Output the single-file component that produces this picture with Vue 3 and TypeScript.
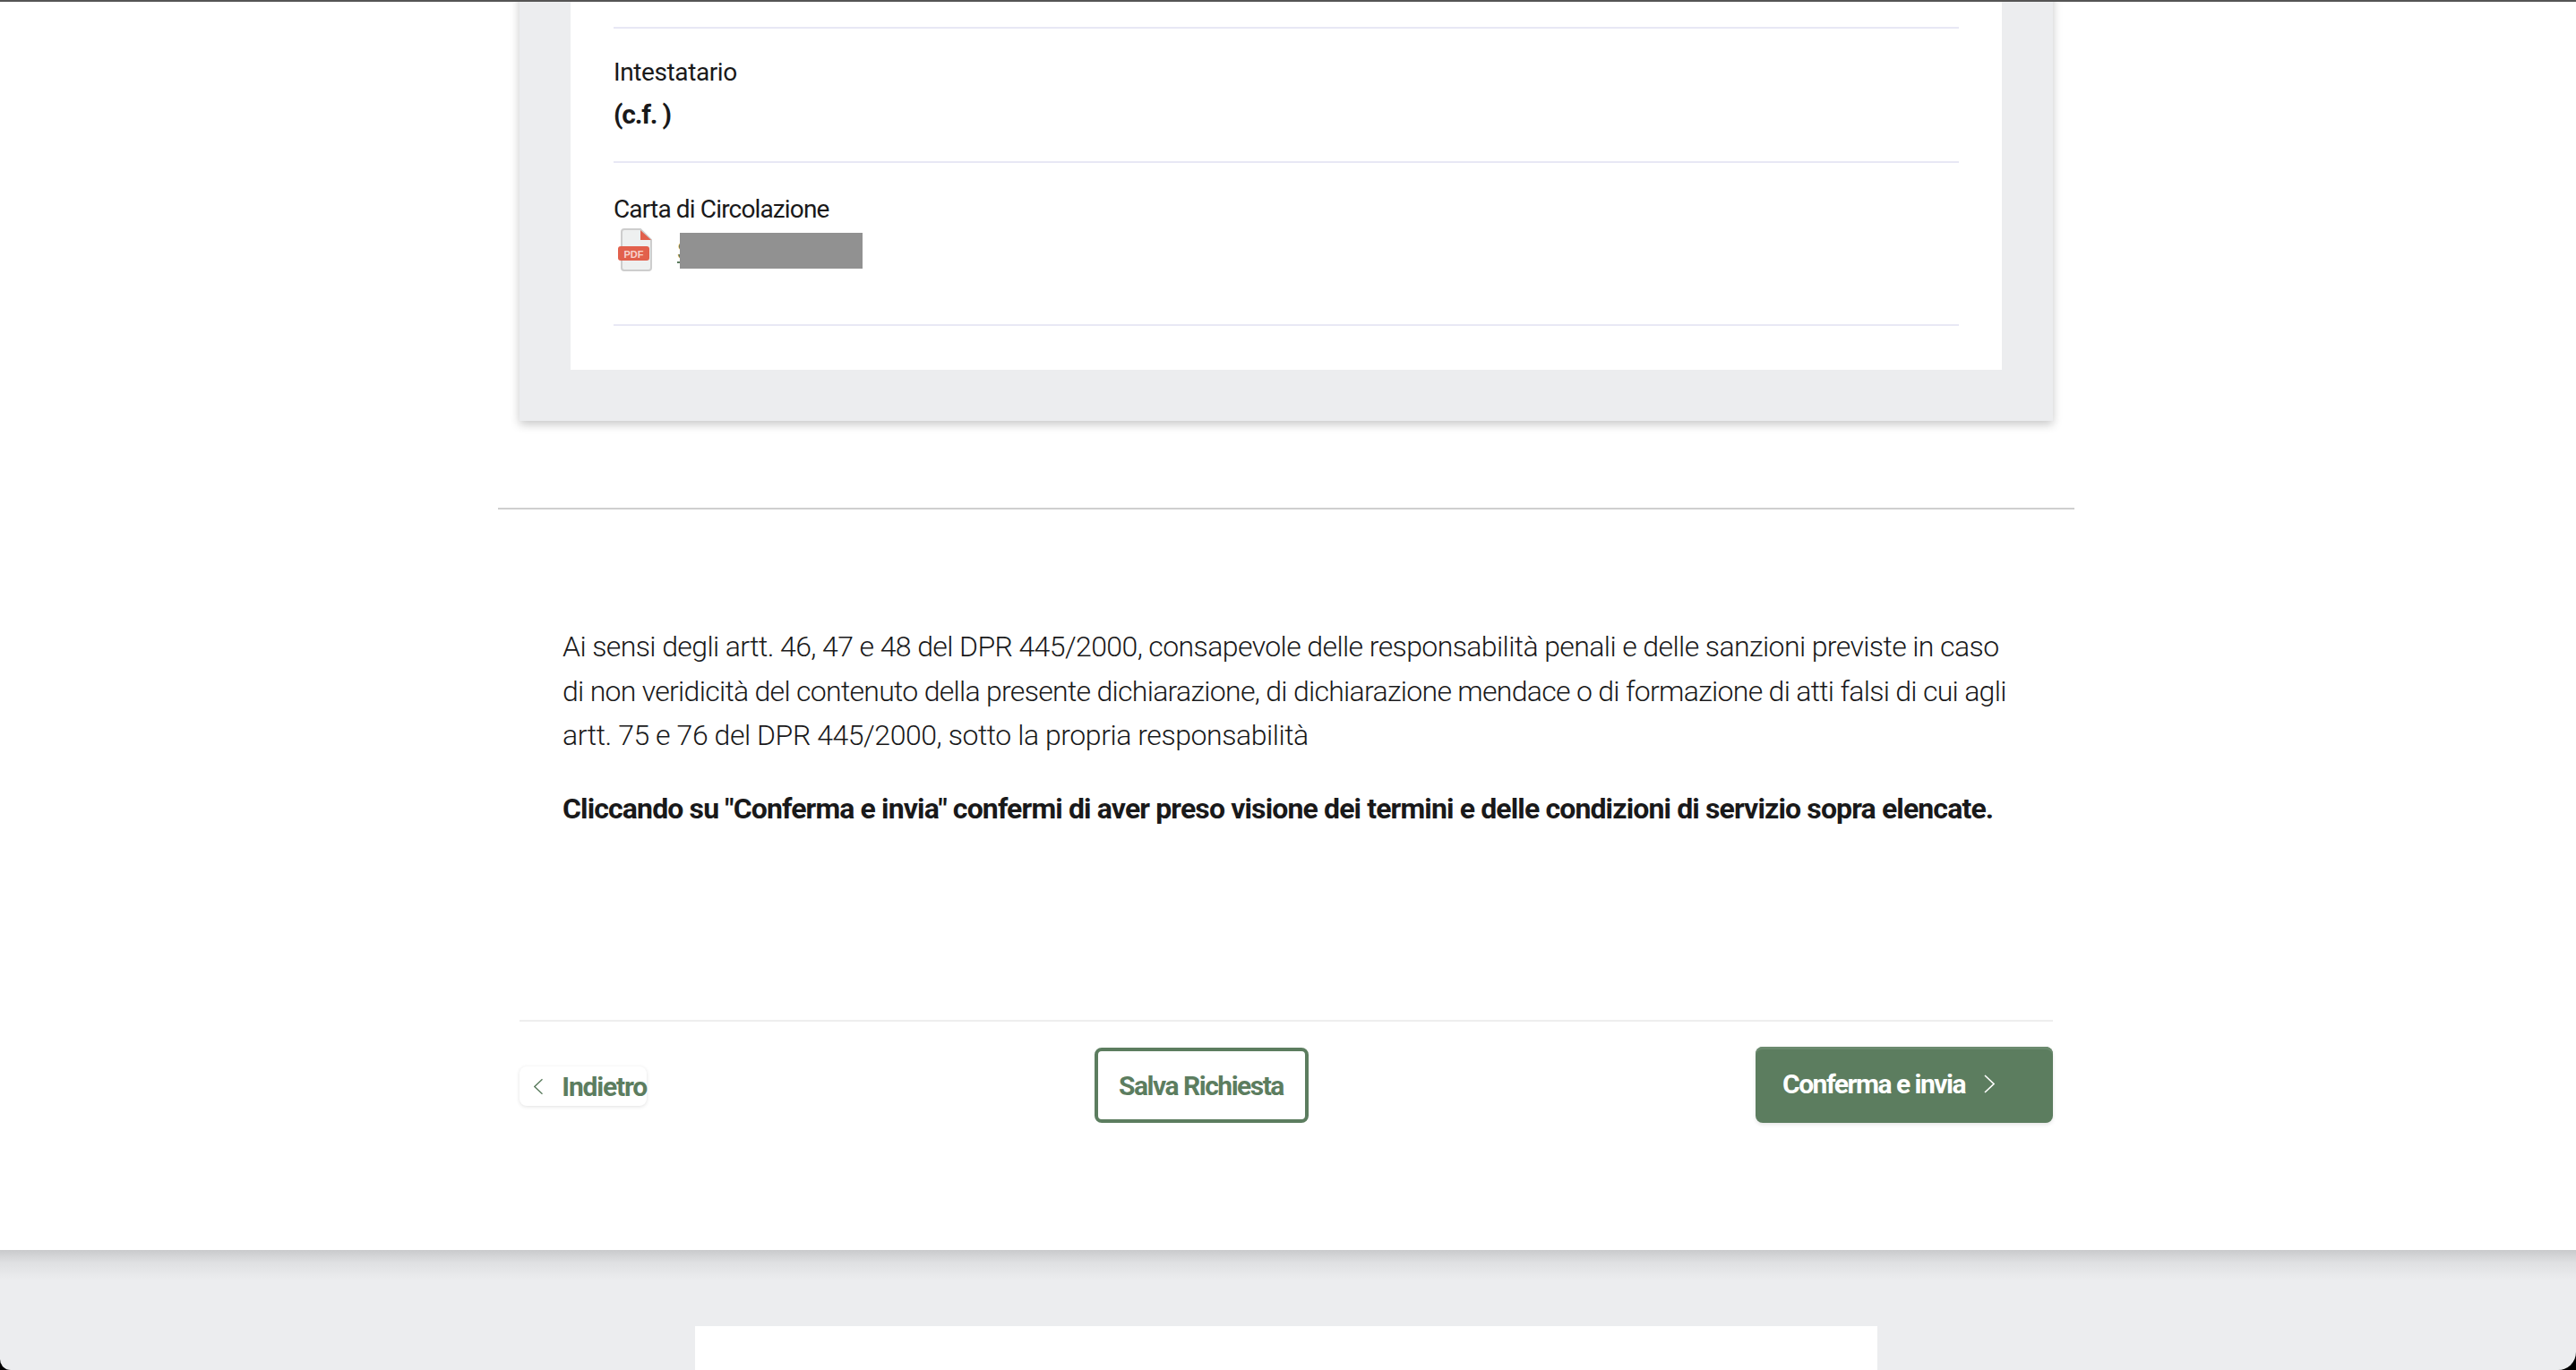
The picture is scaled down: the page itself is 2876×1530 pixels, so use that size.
<script setup lang="ts">
const legal = [
  'Ai sensi degli artt. 46, 47 e 48 del DPR 445/2000, consapevole delle responsabilità penali e delle sanzioni previste in caso',
  'di non veridicità del contenuto della presente dichiarazione, di dichiarazione mendace o di formazione di atti falsi di cui agli',
  'artt. 75 e 76 del DPR 445/2000, sotto la propria responsabilità'
]
</script>

<template>
  <div class="page">
    <main class="sheet">
      <div class="content">
        <section class="card">
          <div class="card-inner">
            <div class="row first"></div>
            <div class="row holder">
              <div class="label">Intestatario</div>
              <div class="value">(c.f. )</div>
            </div>
            <div class="row doc">
              <div class="label tight">Carta di Circolazione</div>
              <div class="file">
                <svg class="pdf" viewBox="0 0 39 48" width="39" height="48">
                  <path d="M7 1h18l12 12v31a3 3 0 0 1-3 3H7a3 3 0 0 1-3-3V4a3 3 0 0 1 3-3z" fill="#eef0f0" stroke="#cdcdcd" stroke-width="2" />
                  <path d="M25 2l12 11H25z" fill="#e2604c" />
                  <rect x="0" y="20" width="35" height="16" rx="3" fill="#e2604c" />
                  <text x="17.5" y="32.5" text-anchor="middle" class="pdf-text">PDF</text>
                </svg>
                <span class="file-name">
                  <span class="file-link">S</span>
                  <span class="redact"></span>
                </span>
              </div>
            </div>
          </div>
        </section>

        <hr class="divider" />

        <section class="legal">
          <p class="legal-text">
            <span v-for="line in legal" :key="line" class="line">{{ line }}</span>
          </p>
          <p class="legal-bold">Cliccando su "Conferma e invia" confermi di aver preso visione dei termini e delle condizioni di servizio sopra elencate.</p>
        </section>

        <nav class="actions">
          <button class="btn-back">
            <svg viewBox="0 0 12 21" width="12" height="21"><path d="M11 1L1 10.5l10 9.5" fill="none" stroke="#5c7d5f" stroke-width="1.6" /></svg>
            Indietro
          </button>
          <button class="btn-save">Salva Richiesta</button>
          <button class="btn-send">
            Conferma e invia
            <svg viewBox="0 0 12 21" width="12" height="21"><path d="M1 1l10 9.5L1 20" fill="none" stroke="#fff" stroke-width="1.6" /></svg>
          </button>
        </nav>
      </div>
    </main>
    <footer class="foot">
      <div class="foot-panel"></div>
    </footer>
  </div>
</template>

<style>
html, body {
  margin: 0;
  background: #000;
  overflow: hidden;
}
</style>

<style scoped>
.page {
  width: 2876px;
  height: 1530px;
  overflow: hidden;
  font-family: Roboto, "Liberation Sans", sans-serif;
  color: #19191a;
  background: #000;
  border-top: 2px solid #555;
  box-sizing: border-box;
}

.sheet {
  height: 1394px;
  overflow: hidden;
  box-sizing: border-box;
  background: #fff;
}

.content {
  width: 1760px;
  margin-left: 556px;
}

/* the page is scrolled: the card carries on above the fold */
.card {
  width: 1712px;
  margin: -40px 0 0 24px;
  padding: 0 57px 57px;
  box-sizing: border-box;
  background: #ecedef;
  box-shadow: 0 4px 10px rgba(0, 0, 0, 0.22);
}

.card-inner {
  padding: 0 48px 49px;
  background: #fff;
}

.row {
  border-bottom: 2px solid #e8e8f5;
}

.first {
  height: 68px;
}

.holder {
  height: 150px;
  box-sizing: border-box;
  padding-top: 32px;
}

.doc {
  height: 182px;
  box-sizing: border-box;
  padding-top: 35px;
}

.label {
  font-size: 28px;
  line-height: 34px;
  letter-spacing: -0.4px;
}

.label.tight {
  letter-spacing: -0.85px;
}

.value {
  margin-top: 12px;
  font-size: 30px;
  line-height: 36px;
  font-weight: 700;
  letter-spacing: -1.2px;
}

.file {
  display: flex;
  align-items: center;
  gap: 23px;
  margin-left: 5px;
  margin-top: 4px;
}

.pdf-text {
  font-family: "Liberation Sans", sans-serif;
  font-size: 11px;
  font-weight: 700;
  fill: #f7d4cd;
}

.file-name {
  position: relative;
  display: block;
  width: 211px;
  height: 41px;
}

.file-link {
  position: absolute;
  left: 4px;
  top: 3px;
  font-size: 28px;
  line-height: 38px;
  color: #5c7d5f;
  text-decoration: underline;
}

.redact {
  position: absolute;
  left: 7px;
  top: 1px;
  width: 204px;
  height: 40px;
  background: #919191;
}

.divider {
  margin: 97px 0 0;
  border: 0;
  height: 2px;
  background: #cfcfcf;
}

.legal {
  height: 570px;
  box-sizing: border-box;
  padding: 129px 0 0 72px;
}

.legal-text {
  margin: 0;
  font-size: 32px;
  line-height: 49.5px;
  font-weight: 300;
}

.line {
  display: block;
  white-space: nowrap;
  letter-spacing: -0.6px;
}

.line:nth-child(2) {
  letter-spacing: -0.71px;
}

.line:nth-child(3) {
  letter-spacing: -0.44px;
}

.legal-bold {
  margin: 32px 0 0;
  font-size: 32px;
  line-height: 49.5px;
  font-weight: 700;
  letter-spacing: -0.87px;
  white-space: nowrap;
}

.actions {
  display: flex;
  justify-content: space-between;
  align-items: center;
  width: 1712px;
  height: 142px;
  margin-left: 24px;
  border-top: 2px solid #eeeeee;
}

button {
  font-family: inherit;
  font-size: 30px;
  font-weight: 700;
  letter-spacing: -1.5px;
  cursor: pointer;
}

.btn-back {
  display: flex;
  align-items: center;
  gap: 21px;
  width: 142px;
  height: 44px;
  margin-top: 2px;
  padding: 0 0 0 16px;
  border: 0;
  border-radius: 8px;
  background: #fff;
  color: #5c7d5f;
  letter-spacing: -1.2px;
  box-shadow: 0 1px 4px rgba(0, 0, 0, 0.12);
  white-space: nowrap;
}

.btn-save {
  width: 239px;
  height: 84px;
  padding: 0;
  border: 4px solid #5c7d5f;
  border-radius: 8px;
  background: #fff;
  color: #5c7d5f;
}

.btn-send {
  display: flex;
  align-items: center;
  gap: 21px;
  width: 332px;
  height: 85px;
  margin-top: -2px;
  padding: 0 0 2px 30px;
  border: 0;
  border-radius: 8px;
  background: #5c7d5f;
  color: #fff;
  box-shadow: inset 0 3px 0 #6b8a6e, 0 2px 4px rgba(0, 0, 0, 0.1);
}

.foot {
  position: relative;
  height: 134px;
  overflow: hidden;
  background: linear-gradient(#c9cacc 0, #dfe0e2 14px, #ecedef 34px);
  border-radius: 0 0 20px 12px;
}

.foot-panel {
  position: absolute;
  left: 776px;
  top: 85px;
  width: 1320px;
  height: 49px;
  background: #fff;
}
</style>
